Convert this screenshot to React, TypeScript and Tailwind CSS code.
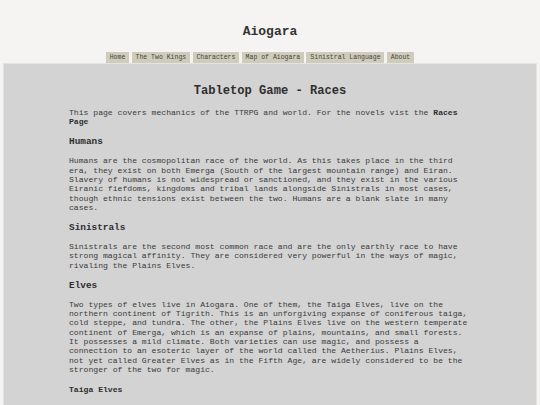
const navItems = [
  'Home',
  'The Two Kings',
  'Characters',
  'Map of Aiogara',
  'Sinistral Language',
  'About',
]

const Heading = ({ children }: { children: React.ReactNode }) => (
  <h3 className="text-[9.4px] leading-[11px] font-bold text-[#2e2e2e] mt-[9.9px] mb-[8.9px]">
    {children}
  </h3>
)

const Para = ({ children }: { children: React.ReactNode }) => (
  <p className="text-[8.1px] leading-[9.33px] text-[#3a3a3a]">{children}</p>
)

export default function App() {
  return (
    <div className="h-screen flex flex-col bg-[#f5f4f2] font-['Liberation_Mono',monospace] overflow-hidden">
      <header className="pt-[24px] text-center">
        <h1 className="text-[13px] leading-[16px] font-bold text-[#333]">
          Aiogara
        </h1>
      </header>
      <nav className="mt-[12px] flex justify-center gap-[2.4px] pr-[20px]">
        {navItems.map((item) => (
          <a
            key={item}
            className="h-[11px] px-[3.9px] leading-[11px] text-[6.5px] text-[#444] bg-[#d0ccbb] whitespace-nowrap"
          >
            {item}
          </a>
        ))}
      </nav>
      <main className="flex-1 mx-[3px] border border-b-0 border-[#e3e3e1] bg-[#d3d3d3] overflow-hidden">
        <div className="mx-auto w-[402px] pt-[19.5px]">
          <h2 className="text-center text-[12.1px] leading-[14px] font-bold text-[#2e2e2e] mb-[10.3px]">
            Tabletop Game - Races
          </h2>
          <Para>
            This page covers mechanics of the TTRPG and world. For the novels
            vist the <b className="font-bold text-[#2e2e2e]">Races Page</b>
          </Para>
          <Heading>Humans</Heading>
          <Para>
            Humans are the cosmopolitan race of the world. As this takes place
            in the third era, they exist on both Emerga (South of the largest
            mountain range) and Eiran. Slavery of humans is not widespread or
            sanctioned, and they exist in the various Eiranic fiefdoms, kingdoms
            and tribal lands alongside Sinistrals in most cases, though ethnic
            tensions exist between the two. Humans are a blank slate in many
            cases.
          </Para>
          <Heading>Sinistrals</Heading>
          <Para>
            Sinistrals are the second most common race and are the only earthly
            race to have strong magical affinity. They are considered very
            powerful in the ways of magic, rivaling the Plains Elves.
          </Para>
          <Heading>Elves</Heading>
          <Para>
            Two types of elves live in Aiogara. One of them, the Taiga Elves,
            live on the northern continent of Tigrith. This is an unforgiving
            expanse of coniferous taiga, cold steppe, and tundra. The other, the
            Plains Elves live on the western temperate continent of Emerga,
            which is an expanse of plains, mountains, and small forests. It
            possesses a mild climate. Both varieties can use magic, and possess
            a connection to an esoteric layer of the world called the Aetherius.
            Plains Elves, not yet called Greater Elves as in the Fifth Age, are
            widely considered to be the stronger of the two for magic.
          </Para>
          <h4 className="mt-[10.7px] text-[8.1px] leading-[9.33px] font-bold text-[#2e2e2e]">
            Taiga Elves
          </h4>
        </div>
      </main>
    </div>
  )
}
